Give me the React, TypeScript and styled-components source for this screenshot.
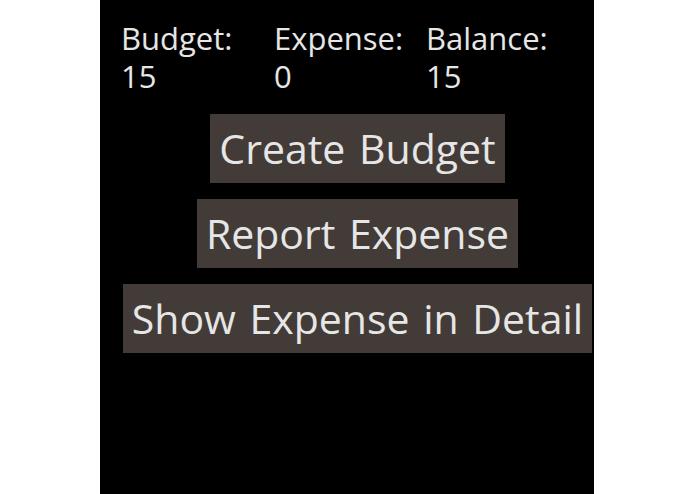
import React from "react";
import styled, { createGlobalStyle } from "styled-components";

const Global = createGlobalStyle`
  html, body { margin: 0; padding: 0; background: #ffffff; }
  body { font-family: "Open Sans", "DejaVu Sans", sans-serif; }
`;

const Page = styled.div`
  display: flex;
  width: 695px;
  height: 494px;
  padding-left: 100px;
  box-sizing: border-box;
`;

const Screen = styled.main`
  width: 494px;
  height: 494px;
  box-sizing: border-box;
  background: #000000;
  padding: 19px 0 0 21px;
  display: flex;
  flex-direction: column;
`;

const Summary = styled.section`
  display: grid;
  grid-template-columns: 153px 152px auto;
`;

const Stat = styled.div`
  display: flex;
  flex-direction: column;
  color: #e6e6e6;
  font-size: 31px;
  line-height: 38px;
`;

const Actions = styled.nav`
  margin-top: 19px;
  display: flex;
  flex-direction: column;
  align-items: center;
  gap: 16px;
`;

const ActionButton = styled.button`
  height: 69px;
  padding: 0 9px;
  border: none;
  border-radius: 0;
  background: #423b37;
  color: #e6e6e6;
  font-family: "Open Sans", "DejaVu Sans", sans-serif;
  font-size: 41px;
  word-spacing: 3px;
  line-height: 69px;
  white-space: nowrap;
  cursor: pointer;
`;

const stats = [
  { label: "Budget:", value: 15 },
  { label: "Expense:", value: 0 },
  { label: "Balance:", value: 15 },
];

const actions = ["Create Budget", "Report Expense", "Show Expense in Detail"];

export default function App() {
  return (
    <Page>
      <Global />
      <Screen>
        <Summary>
          {stats.map((s) => (
            <Stat key={s.label}>
              <span>{s.label}</span>
              <span>{s.value}</span>
            </Stat>
          ))}
        </Summary>
        <Actions>
          {actions.map((a) => (
            <ActionButton key={a}>{a}</ActionButton>
          ))}
        </Actions>
      </Screen>
    </Page>
  );
}
